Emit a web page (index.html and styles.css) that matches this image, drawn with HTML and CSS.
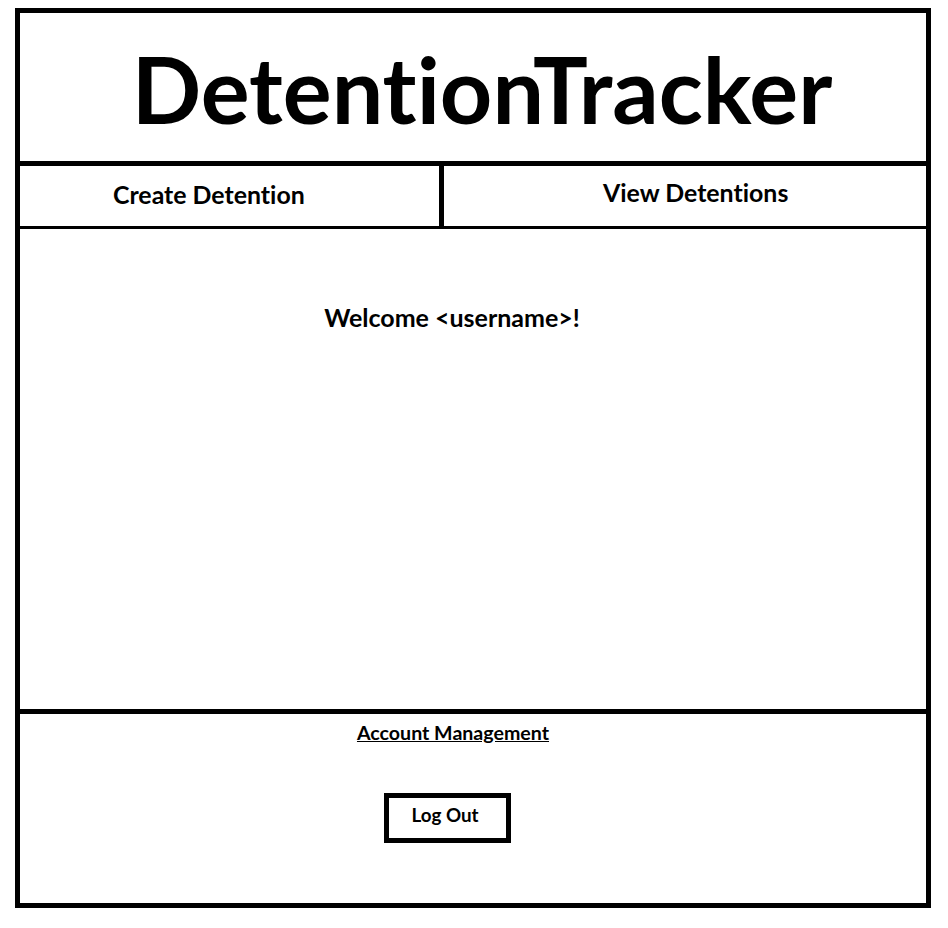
FILE: index.html
```html
<!DOCTYPE html>
<html lang="en">
<head>
<meta charset="utf-8">
<title>DetentionTracker</title>
<link rel="stylesheet" href="styles.css">
</head>
<body>
<div class="frame">
  <header class="header">
    <h1 class="title">DetentionTracker</h1>
  </header>
  <nav class="nav">
    <div class="nav-cell nav-create"><span>Create Detention</span></div>
    <div class="nav-cell nav-view"><span>View Detentions</span></div>
  </nav>
  <main class="main">
    <p class="welcome">Welcome &lt;username&gt;!</p>
  </main>
  <footer class="footer">
    <a class="account" href="#">Account Management</a>
    <button class="logout" type="button">Log Out</button>
  </footer>
</div>
</body>
</html>
```

FILE: styles.css
```css
html, body {
  margin: 0;
  padding: 0;
  background: #fff;
}

body {
  font-family: Lato, "Open Sans", sans-serif;
  color: #000;
  font-variant-ligatures: none;
}

.frame {
  box-sizing: border-box;
  margin: 8px 0 0 15px;
  width: 916px;
  height: 900px;
  border: 5px solid #000;
  display: flex;
  flex-direction: column;
}

.header {
  height: 148px;
  border-bottom: 5px solid #000;
  display: flex;
  align-items: center;
  justify-content: center;
  flex: none;
}

.title {
  margin: 0;
  font-size: 91.5px;
  font-weight: 700;
  line-height: 1;
  padding: 3px 0 0 18px;
  font-variant-ligatures: none;
}

.nav {
  height: 60px;
  border-bottom: 3px solid #000;
  display: flex;
  flex: none;
}

.nav-cell {
  display: flex;
  align-items: center;
  font-size: 24.9px;
  font-weight: 700;
}

.nav-create {
  box-sizing: border-box;
  width: 424px;
  border-right: 5px solid #000;
  padding-left: 93px;
  padding-bottom: 4px;
}

.nav-view {
  flex: 1;
  box-sizing: border-box;
  padding-left: 159px;
  padding-bottom: 8px;
}

.main {
  height: 480px;
  border-bottom: 5px solid #000;
  flex: none;
  display: flex;
  justify-content: center;
  padding-right: 42px;
}

.welcome {
  margin: 73px 0 0;
  font-size: 25px;
  font-weight: 700;
}

.footer {
  flex: 1;
  display: flex;
  flex-direction: column;
  align-items: center;
  padding-right: 42px;
}

.account {
  margin: 7px 0 0 2px;
  font-size: 19.6px;
  font-weight: 700;
  color: #000;
  text-decoration: underline;
}

.logout {
  margin-top: 49px;
  margin-left: -10px;
  width: 127px;
  height: 50px;
  box-sizing: border-box;
  border: 5px solid #000;
  background: #fff;
  font-family: Lato, "Open Sans", sans-serif;
  font-size: 18.8px;
  font-weight: 700;
  color: #000;
  padding: 0 4px 7px 0;
}
```
